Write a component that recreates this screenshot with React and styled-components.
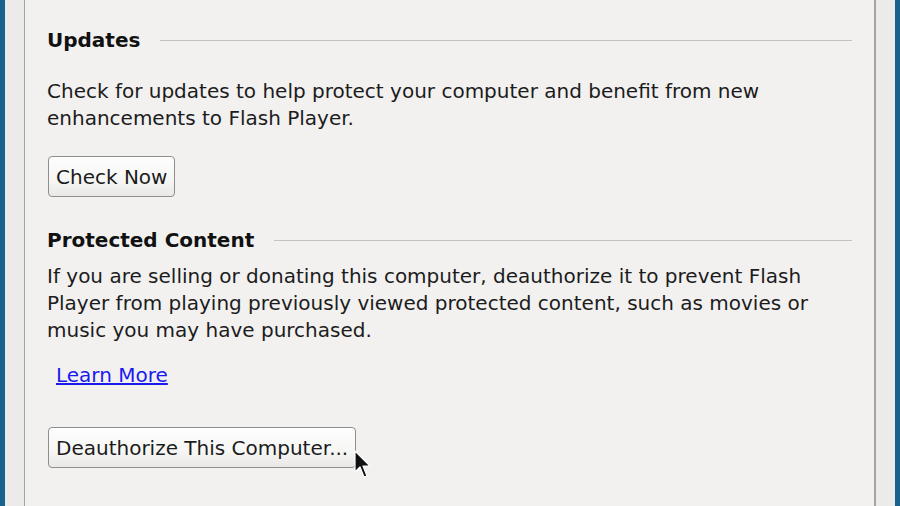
import styled, { createGlobalStyle } from "styled-components";

const GlobalStyle = createGlobalStyle`
  html, body {
    margin: 0;
    padding: 0;
    overflow: hidden;
  }
  body {
    font-family: "DejaVu Sans", "Liberation Sans", sans-serif;
  }
`;

const Screen = styled.div`
  display: flex;
  width: 900px;
  height: 506px;
  background: #ebebea;
`;

const DesktopEdge = styled.div`
  width: 5px;
  flex: none;
  background: #17638e;
`;

const Gutter = styled.div`
  width: 19px;
  flex: none;
  background: #ebebea;
`;

const Panel = styled.div`
  flex: 1;
  display: flex;
  flex-direction: column;
  background: #f2f1f0;
  border-left: 1px solid #a3a3a3;
  border-right: 2px solid #a3a3a3;
  padding: 27px 22px 0 22px;
  color: #1c1c1c;
  font-size: 20px;
  line-height: 27px;
`;

const SectionHead = styled.div`
  display: flex;
  align-items: center;
  gap: 20px;
  font-weight: bold;
  color: #111;
  margin-top: ${(p) => p.$top || 0}px;

  &::after {
    content: "";
    flex: 1;
    height: 1px;
    background: #c4c3c1;
  }
`;

const Text = styled.p`
  margin: ${(p) => p.$top || 0}px 0 0 0;
`;

const LinkRow = styled.div`
  margin-top: ${(p) => p.$top || 0}px;
  padding-left: 9px;
`;

const Link = styled.a`
  color: #1a1aee;
  text-decoration: underline;
  cursor: pointer;
`;

const ButtonWrap = styled.div`
  position: relative;
  align-self: flex-start;
  margin-top: ${(p) => p.$top || 0}px;
  margin-left: 1px;
`;

const Button = styled.button`
  font-family: inherit;
  font-size: 20px;
  color: #1c1c1c;
  height: 41px;
  padding: 0 7px;
  border: 1px solid #8e8e8e;
  border-radius: 4px;
  background: linear-gradient(#fdfdfd, #f6f6f5 60%, #e9e8e7);
  box-shadow: inset 0 1px 0 #ffffff;
`;

const Cursor = styled.svg`
  position: absolute;
  left: calc(100% - 2px);
  top: 23px;
  width: 19px;
  height: 30px;
  pointer-events: none;
`;

function Pointer() {
  return (
    <Cursor viewBox="0 0 19 30">
      <path
        d="M1 1 L1 22 L6 17 L10 27 L13 26 L9 16 L16 16 Z"
        fill="#111"
        stroke="#fff"
        strokeWidth="1.2"
        strokeLinejoin="round"
      />
    </Cursor>
  );
}

export default function App() {
  return (
    <>
      <GlobalStyle />
      <Screen>
        <DesktopEdge />
        <Gutter />
        <Panel>
          <SectionHead>Updates</SectionHead>
          <Text $top={24}>
            Check for updates to help protect your computer and benefit from new
            enhancements to Flash Player.
          </Text>
          <ButtonWrap $top={24}>
            <Button>Check Now</Button>
          </ButtonWrap>

          <SectionHead $top={30}>Protected Content</SectionHead>
          <Text $top={9}>
            If you are selling or donating this computer, deauthorize it to
            prevent Flash Player from playing previously viewed protected
            content, such as movies or music you may have purchased.
          </Text>
          <LinkRow $top={18}>
            <Link>Learn More</Link>
          </LinkRow>
          <ButtonWrap $top={38}>
            <Button>Deauthorize This Computer...</Button>
            <Pointer />
          </ButtonWrap>
        </Panel>
        <Gutter />
        <DesktopEdge />
      </Screen>
    </>
  );
}
